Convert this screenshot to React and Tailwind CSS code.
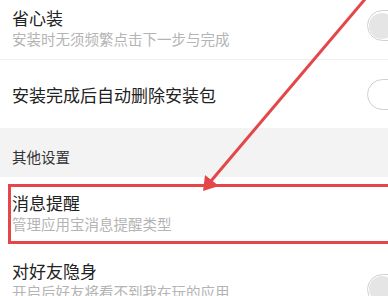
const font = { fontFamily: '"Noto Sans CJK SC", "Noto Sans", sans-serif' };

function Toggle({ filled, low }) {
  return (
    <div
      className={
        'shrink-0 -mr-[33px] w-[54px] h-[31px] rounded-full border-[1.5px] border-[#d0d0d0] bg-white flex items-center ' +
        (low ? 'mt-[20px]' : '')
      }
    >
      {filled && <div className="ml-[1px] w-[26px] h-[26px] rounded-full bg-[#e5e5e5]" />}
    </div>
  );
}

function Row({ title, sub, toggle, divider, low }) {
  return (
    <div
      className={
        'h-[68px] pl-3 flex items-center justify-between overflow-hidden bg-white ' +
        (divider ? 'border-b border-[#efefef]' : '')
      }
    >
      <div className={'flex flex-col ' + (sub ? 'pt-[4px]' : 'pt-[2px]')}>
        <div className="text-[17px] leading-[22px] text-[#222222]">{title}</div>
        {sub && <div className="text-[14.5px] leading-[20px] text-[#b4b4b4]">{sub}</div>}
      </div>
      {toggle && <Toggle filled={toggle === 'filled'} low={low} />}
    </div>
  );
}

export default function App() {
  return (
    <div className="relative w-[388px] h-[296px] overflow-hidden bg-white" style={font}>
      <div className="-mt-[8px]">
        <Row title="省心装" sub="安装时无须频繁点击下一步与完成" toggle="filled" divider />
        <Row title="安装完成后自动删除安装包" toggle="outline" />
        <div className="h-[49px] bg-[#f3f3f3] pl-3 pt-[19px]">
          <div className="text-[14.5px] leading-[20px] text-[#333333]">其他设置</div>
        </div>
        <Row title="消息提醒" sub="管理应用宝消息提醒类型" />
        <Row title="对好友隐身" sub="开启后好友将看不到我在玩的应用" toggle="filled" low />
      </div>

      {/* red annotation box + arrow */}
      <div className="absolute left-[8px] top-[184px] w-[400px] h-[60px] border-[3px] border-[#e4474a]" />
      <svg className="absolute left-0 top-0" width="388" height="296" viewBox="0 0 388 296">
        <line x1="366" y1="-2" x2="211" y2="181" stroke="#e4474a" strokeWidth="3" />
        <polygon points="203,191 205,175 219,186" fill="#e4474a" />
      </svg>
    </div>
  );
}
